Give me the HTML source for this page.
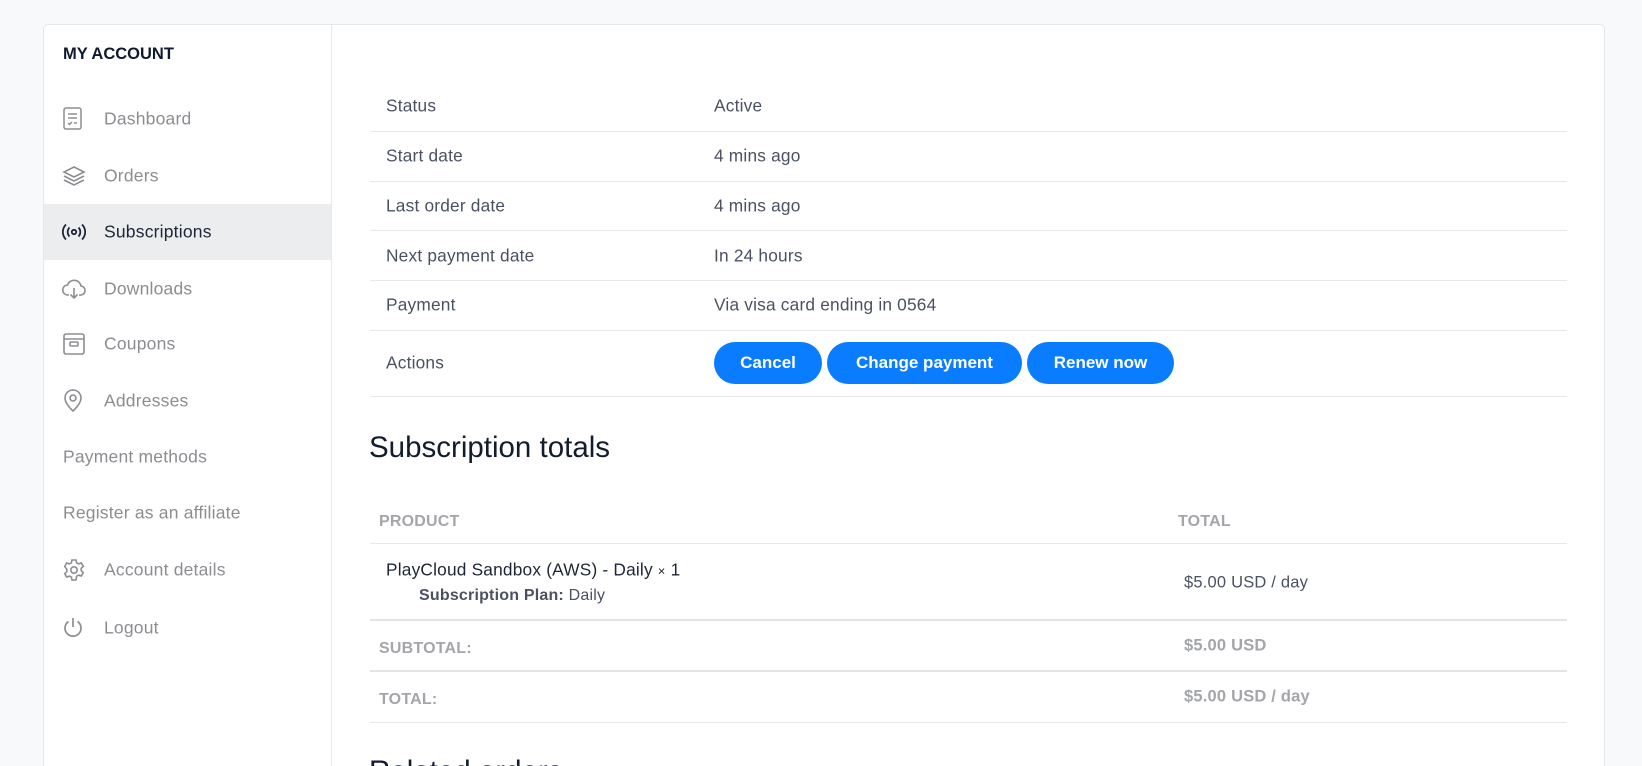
<!DOCTYPE html>
<html><head><meta charset="utf-8"><style>
*{box-sizing:border-box;margin:0;padding:0}
html{width:1642px;height:766px;overflow:hidden}
body{width:1642px;height:766px;overflow:hidden;background:#f8f9fb;font-family:"Liberation Sans",sans-serif;position:relative}
.panel{position:absolute;left:43px;top:24px;width:1562px;height:742px;background:#fff;border:1px solid #e6e8eb;border-bottom:none;border-radius:5px 5px 0 0}
.side{position:absolute;left:0;top:0;width:288px;height:100%;border-right:1px solid #e6e8eb}
.t{position:absolute;white-space:nowrap}
.h{left:19px;top:20px;font-size:16.5px;font-weight:bold;color:#0e1a2e}
.nav{position:absolute;left:0;width:287px;height:56px;font-size:17.5px;color:#8b8d91;letter-spacing:0.2px}
.nav span{position:absolute;left:60px;top:50%;transform:translateY(-50%)}
.nav.np span{left:19px}
.nav svg{position:absolute;left:18px;top:50%;transform:translateY(-50%)}
.nav.act{background:#ecedef;color:#1d2536}
.row{position:absolute;left:370px;width:1197px;border-bottom:1px solid #e6e8eb}
.c{position:absolute;font-size:17.3px;color:#4a5160;white-space:nowrap;transform:translateY(-50%);letter-spacing:0.2px}
.btn{position:absolute;height:42px;background:#0a7cff;border-radius:21px;color:#fff;font-weight:bold;font-size:17px;line-height:42px;text-align:center}
.g{color:#a3a5a9;font-weight:bold}
.clip{position:absolute;left:0;top:0;width:1642px;height:766px;overflow:hidden}
</style></head><body><div class="clip">
<div class="panel">
<div class="side">
<div class="t h">MY ACCOUNT</div>
<div class="nav" style="top:66px"><svg width="22" height="24" viewBox="0 0 22 24" fill="none" stroke="#8b8d91" stroke-width="1.5"><rect x="2" y="1" width="17" height="21" rx="2"/><path d="M6 7h9M6 11h9M6 16l1.5 1.5 2.5-2.5M12 16h3"/></svg><span>Dashboard</span></div>
<div class="nav" style="top:123px"><svg width="24" height="22" viewBox="0 0 24 22" fill="none" stroke="#8b8d91" stroke-width="1.6"><path d="M12 2l10 5-10 5-10-5z"/><path d="M2 11l10 5 10-5M2 15l10 5 10-5"/></svg><span>Orders</span></div>
<div class="nav act" style="top:179px"><svg width="24" height="20" viewBox="0 0 24 20" fill="none" stroke="#1d2536" stroke-width="1.8"><circle cx="12" cy="10" r="2.2"/><path d="M7.5 5.5a6.5 6.5 0 000 9M16.5 5.5a6.5 6.5 0 010 9M4 2.5a10.5 10.5 0 000 15M20 2.5a10.5 10.5 0 010 15"/></svg><span>Subscriptions</span></div>
<div class="nav" style="top:236px"><svg width="24" height="22" viewBox="0 0 24 22" fill="none" stroke="#8b8d91" stroke-width="1.6"><path d="M7 17H6a5 5 0 01-.5-10A7 7 0 0119 8a4.5 4.5 0 01-1 9h-1"/><path d="M12 10v10M8.5 16.5L12 20l3.5-3.5"/></svg><span>Downloads</span></div>
<div class="nav" style="top:291px"><svg width="24" height="24" viewBox="0 0 24 24" fill="none" stroke="#8b8d91" stroke-width="1.6"><rect x="2" y="2" width="20" height="20" rx="2"/><path d="M2 7h20"/><rect x="8" y="10" width="8" height="4" rx="1"/></svg><span>Coupons</span></div>
<div class="nav" style="top:348px"><svg width="22" height="24" viewBox="0 0 22 24" fill="none" stroke="#8b8d91" stroke-width="1.6"><path d="M11 22s-8-7-8-13a8 8 0 0116 0c0 6-8 13-8 13z"/><circle cx="11" cy="9" r="3"/></svg><span>Addresses</span></div>
<div class="nav np" style="top:404px"><span>Payment methods</span></div>
<div class="nav np" style="top:460px"><span>Register as an affiliate</span></div>
<div class="nav" style="top:517px"><svg width="24" height="24" viewBox="0 0 24 24" fill="none" stroke="#8b8d91" stroke-width="1.6"><circle cx="12" cy="12" r="3.2"/><path d="M10 2h4l.6 2.8 2 1.1 2.7-.9 2 3.4-2.1 1.9v2.4l2.1 1.9-2 3.4-2.7-.9-2 1.1L14 22h-4l-.6-2.8-2-1.1-2.7.9-2-3.4 2.1-1.9v-2.4L2.7 8.4l2-3.4 2.7.9 2-1.1z"/></svg><span>Account details</span></div>
<div class="nav" style="top:575px"><svg width="22" height="24" viewBox="0 0 22 24" fill="none" stroke="#8b8d91" stroke-width="1.7"><path d="M11 2v9"/><path d="M6.5 5.5a8 8 0 109 0"/></svg><span>Logout</span></div>
</div>
</div>
<div class="row" style="top:0;height:132px"></div>
<div class="row" style="top:132px;height:50px"></div>
<div class="row" style="top:182px;height:49px"></div>
<div class="row" style="top:231px;height:50px"></div>
<div class="row" style="top:281px;height:50px"></div>
<div class="row" style="top:331px;height:66px"></div>
<div class="c" style="left:386px;top:106px">Status</div><div class="c" style="left:714px;top:106px">Active</div>
<div class="c" style="left:386px;top:156px">Start date</div><div class="c" style="left:714px;top:156px">4 mins ago</div>
<div class="c" style="left:386px;top:206px">Last order date</div><div class="c" style="left:714px;top:206px">4 mins ago</div>
<div class="c" style="left:386px;top:256px">Next payment date</div><div class="c" style="left:714px;top:256px">In 24 hours</div>
<div class="c" style="left:386px;top:305px">Payment</div><div class="c" style="left:714px;top:305px">Via visa card ending in 0564</div>
<div class="c" style="left:386px;top:363px">Actions</div>
<div class="btn" style="left:714px;top:342px;width:108px">Cancel</div>
<div class="btn" style="left:827px;top:342px;width:195px">Change payment</div>
<div class="btn" style="left:1027px;top:342px;width:147px">Renew now</div>
<div class="c" style="left:369px;top:448px;font-size:29.5px;color:#111c2e;letter-spacing:0">Subscription totals</div>
<div class="row" style="top:500px;height:44px"></div>
<div class="row" style="top:544px;height:77px;border-bottom:2px solid #e3e4e6"></div>
<div class="row" style="top:621px;height:51px;border-bottom:2px solid #e3e4e6"></div>
<div class="row" style="top:672px;height:51px"></div>
<div class="c g" style="left:379px;top:522px;font-size:16px">PRODUCT</div>
<div class="c g" style="left:1178px;top:522px;font-size:16px">TOTAL</div>
<div class="c" style="left:386px;top:570px;color:#1d2536">PlayCloud Sandbox (AWS) - Daily <span style="font-size:13px">×</span> 1</div>
<div class="c" style="left:419px;top:596px;font-size:16px"><b>Subscription Plan:</b> Daily</div>
<div class="c" style="left:1184px;top:583px;font-size:16.5px">$5.00 USD / day</div>
<div class="c g" style="left:379px;top:649px;font-size:16px">SUBTOTAL:</div>
<div class="c g" style="left:1184px;top:646px;font-size:16.5px">$5.00 USD</div>
<div class="c g" style="left:379px;top:700px;font-size:16px">TOTAL:</div>
<div class="c g" style="left:1184px;top:697px;font-size:16.5px">$5.00 USD / day</div>
<div class="t" style="left:369px;top:755px;font-size:29.5px;color:#111c2e">Related orders</div>
</div></body></html>
